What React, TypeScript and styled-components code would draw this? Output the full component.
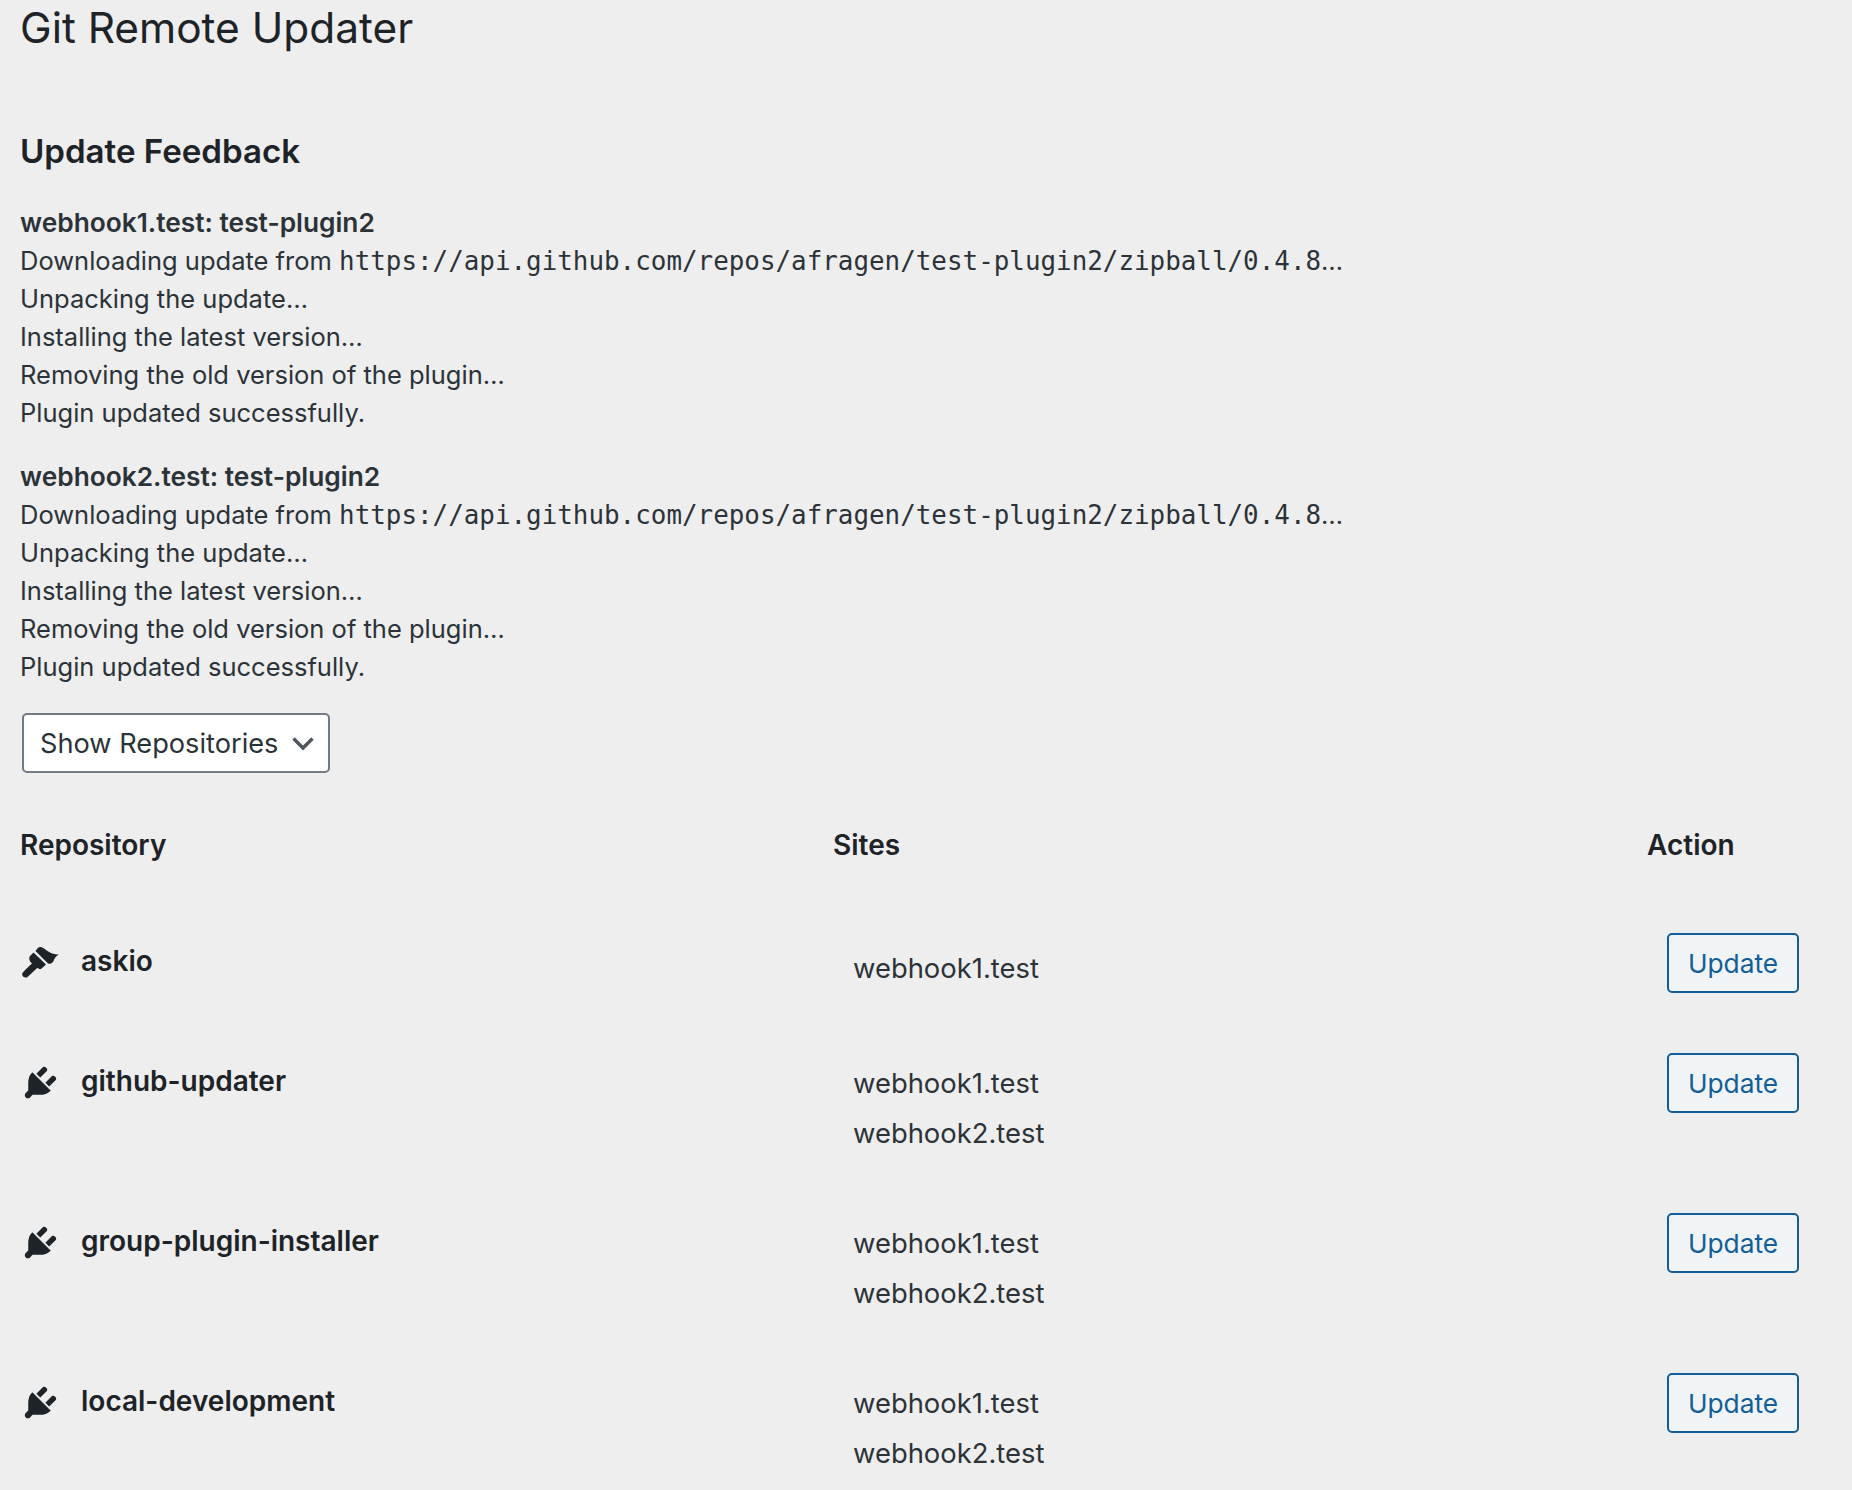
import React from "react";
import styled, { createGlobalStyle } from "styled-components";

const GlobalStyle = createGlobalStyle`
  html, body {
    margin: 0;
    padding: 0;
    background: #eeeeef;
  }
  body {
    font-family: Inter, "Liberation Sans", sans-serif;
    color: #2c3338;
    overflow: hidden;
  }
`;

const Page = styled.div`
  width: 1852px;
  height: 1490px;
  box-sizing: border-box;
  padding: 0 20px;
  overflow: hidden;
`;

const Title = styled.h1`
  margin: 0;
  height: 56px;
  font-size: 42.4px;
  font-weight: 400;
  line-height: 56px;
  color: #1d2327;
`;

const SectionTitle = styled.h2`
  margin: 72px 0 0;
  font-size: 33.1px;
  font-weight: 600;
  line-height: 46px;
  color: #1d2327;
`;

const Feedback = styled.div`
  margin-top: 30px;
  font-size: 25.5px;
  line-height: 38px;
`;

const SiteBlock = styled.div`
  margin-bottom: 26px;
  &:last-child {
    margin-bottom: 0;
  }
`;

const Line = styled.div`
  white-space: nowrap;
`;

const SiteName = styled(Line)`
  font-size: 26.3px;
  font-weight: 600;
`;

const Url = styled.code`
  font-family: "DejaVu Sans Mono", "Liberation Mono", monospace;
  font-size: 25.9px;
`;

const Toggle = styled.button`
  display: flex;
  align-items: center;
  justify-content: space-between;
  box-sizing: border-box;
  width: 308px;
  height: 60px;
  margin: 27px 0 0 2px;
  padding: 0 12px 0 16px;
  background: #fff;
  border: 2px solid #717b85;
  border-radius: 5px;
  font-family: inherit;
  font-size: 27.2px;
  white-space: nowrap;
  color: #2c3338;
`;

const Table = styled.div`
  margin-top: 49px;
`;

const Row = styled.div`
  display: grid;
  grid-template-columns: 813px 814px 1fr;
  height: ${(p) => p.$height}px;
`;

const HeadCell = styled.div`
  font-size: 28px;
  font-weight: 600;
  line-height: 46px;
  color: #1d2327;
`;

const RepoCell = styled.div`
  display: flex;
  align-items: flex-start;
  gap: 20px;
  font-size: 28px;
  font-weight: 600;
  line-height: 40px;
  color: #1d2327;
`;

const RepoIcon = styled.svg`
  flex: none;
  width: 41px;
  height: 41px;
  margin-top: 9px;
  fill: #1d2327;
`;

const RepoName = styled.span`
  margin-top: 8px;
`;

const SitesCell = styled.div`
  padding: ${(p) => (p.$single ? 10 : 5)}px 0 0 20px;
  font-size: 27.4px;
  line-height: 50px;
`;

const ActionCell = styled.div`
  display: flex;
  justify-content: flex-end;
  padding-right: 33px;
  align-items: flex-start;
`;

const UpdateButton = styled.button`
  box-sizing: border-box;
  width: 132px;
  height: 60px;
  padding: 0;
  background: #f0f4f7;
  border: 2px solid #135e96;
  border-radius: 5px;
  font-family: inherit;
  font-size: 26.3px;
  color: #135e96;
`;

const BrushIcon = () => (
  <RepoIcon viewBox="20 11 41 41">
    <path d="M33.5 21.5L46 33.5 41 38C39.5 38.5 38.5 37.5 37.5 36.8L27.5 46C25.5 47.5 22.5 46 22.2 43.5 22 42 23 41 32 32.5 31 31.5 29.5 30 29.3 28 29 26 30 25 30 25Z" />
    <path d="M35.5 20L37 18C38 16.5 40 15.5 42 16.5 45 17.8 47 20 50 21.5 53 23 56 23.5 59 23.5 56 25 54.5 27 53.5 30 52.5 32 50.5 33.5 48 32.5Z" />
  </RepoIcon>
);

const PluginIcon = () => (
  <RepoIcon viewBox="0 0 20 20">
    <path d="M13.11 4.36L9.87 7.6 8 5.73l3.24-3.24c.35-.34 1.05-.2 1.56.32.52.51.66 1.21.31 1.55zm-8 1.77l.91-1.12 9.01 9.01-1.19.84c-.71.71-2.63 1.16-3.82 1.16H6.14L4.9 17.26c-.59.59-1.54.59-2.12 0-.59-.58-.59-1.53 0-2.12l1.24-1.24v-3.88c0-1.13.4-3.19 1.09-3.89zm7.26 3.97l3.24-3.24c.34-.35 1.04-.21 1.55.31.52.51.66 1.21.31 1.55l-3.24 3.25z" />
  </RepoIcon>
);

const feedbackSites = ["webhook1.test", "webhook2.test"];

const repos = [
  { name: "askio", theme: true, sites: ["webhook1.test"] },
  { name: "github-updater", sites: ["webhook1.test", "webhook2.test"] },
  { name: "group-plugin-installer", sites: ["webhook1.test", "webhook2.test"] },
  { name: "local-development", sites: ["webhook1.test", "webhook2.test"] },
];

export default function App() {
  return (
    <Page>
      <GlobalStyle />
      <Title>Git Remote Updater</Title>
      <SectionTitle>Update Feedback</SectionTitle>
      <Feedback>
        {feedbackSites.map((site) => (
          <SiteBlock key={site}>
            <SiteName>{site}: test-plugin2</SiteName>
            <Line>
              Downloading update from{" "}
              <Url>https://api.github.com/repos/afragen/test-plugin2/zipball/0.4.8</Url>…
            </Line>
            <Line>Unpacking the update…</Line>
            <Line>Installing the latest version…</Line>
            <Line>Removing the old version of the plugin…</Line>
            <Line>Plugin updated successfully.</Line>
          </SiteBlock>
        ))}
      </Feedback>
      <Toggle>
        Show Repositories
        <svg width="26" height="26" viewBox="0 0 26 26" fill="none" stroke="#50575e" strokeWidth="3.4">
          <path d="M3.5 8.5L13 18l9.5-9.5" />
        </svg>
      </Toggle>
      <Table>
        <Row $height={111}>
          <HeadCell>Repository</HeadCell>
          <HeadCell>Sites</HeadCell>
          <HeadCell>Action</HeadCell>
        </Row>
        {repos.map((repo) => (
          <Row key={repo.name} $height={repo.sites.length > 1 ? 160 : 120}>
            <RepoCell>
              {repo.theme ? <BrushIcon /> : <PluginIcon />}
              <RepoName>{repo.name}</RepoName>
            </RepoCell>
            <SitesCell $single={repo.sites.length === 1}>
              {repo.sites.map((site) => (
                <div key={site}>{site}</div>
              ))}
            </SitesCell>
            <ActionCell>
              <UpdateButton>Update</UpdateButton>
            </ActionCell>
          </Row>
        ))}
      </Table>
    </Page>
  );
}
